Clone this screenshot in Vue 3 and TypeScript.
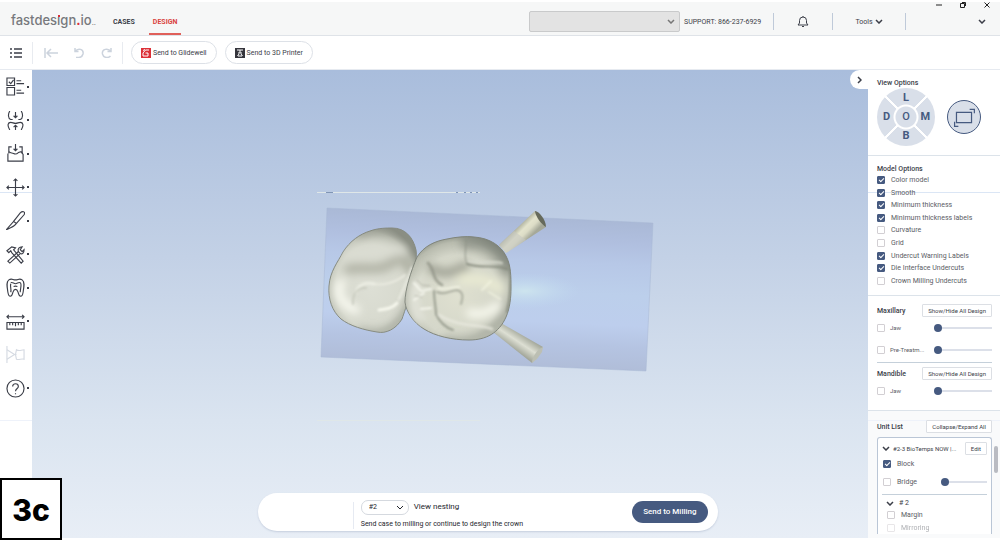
<script setup lang="ts">
import { ref } from 'vue'

interface Option {
  id: string
  label: string
  on: boolean
}
interface Layer extends Option {
  level: number
}

const modelOptions = ref<Option[]>([
  { id: 'color', label: 'Color model', on: true },
  { id: 'smooth', label: 'Smooth', on: true },
  { id: 'min', label: 'Minimum thickness', on: true },
  { id: 'minlabels', label: 'Minimum thickness labels', on: true },
  { id: 'curve', label: 'Curvature', on: false },
  { id: 'grid', label: 'Grid', on: false },
  { id: 'undercut', label: 'Undercut Warning Labels', on: true },
  { id: 'die', label: 'Die Interface Undercuts', on: true },
  { id: 'crown', label: 'Crown Milling Undercuts', on: false },
])

const maxillary = ref<Layer[]>([
  { id: 'max-jaw', label: 'Jaw', on: false, level: 0 },
  { id: 'max-pre', label: 'Pre-Treatm...', on: false, level: 0 },
])
const mandible = ref<Layer[]>([{ id: 'man-jaw', label: 'Jaw', on: false, level: 0 }])

const block = ref(true)
const bridge = ref(false)
const bridgeLevel = ref(0)
const margin = ref(false)
const mirroring = ref(false)

const views: string[] = ['L', 'D', 'O', 'M', 'B']

interface Tool {
  name: string
  enabled: boolean
  paths: string[]
}
const tools: Tool[] = [
  { name: 'Case checklist', enabled: true, paths: ['M1 1h8v8H1z', 'M1 11h8v8H1z', 'M3 5l2 2 3-4', 'M11 4h5M11 7h8M11 14h5M11 17h8'] },
  { name: 'Bite alignment', enabled: true, paths: ['M4 0C2 3 2 8 5 9h2M16 0c2 3 2 8-1 9h-2', 'M10 1v6M8 5l2 2 2-2', 'M4 20c-3-5-2-8 1-8 2 0 3 1 5 1s3-1 5-1c3 0 4 3 1 8', 'M10 20v-5M8 17l2-2 2 2'] },
  { name: 'Insertion', enabled: true, paths: ['M6 3H3v7M14 3h3v7', 'M3 8c2 2 3 1 5 2s3 1 5-1l3-1 2 3v7H2v-8', 'M10 0v7M8 5l2 2 2-2'] },
  { name: 'Move', enabled: true, paths: ['M10 1v18M1 10h18', 'M8 3l2-2 2 2M8 17l2 2 2-2M3 8l-2 2 2 2M17 8l2 2-2 2'] },
  { name: 'Sculpt', enabled: true, paths: ['M0 20l8-9 3 2c-2 4-6 4-11 7z', 'M8 11L15 2c2-2 6-2 4 2l-8 9'] },
  { name: 'Repair', enabled: true, paths: ['M2 17L13 7l2 2L4 19z', 'M13 7c-1-3 1-5 4-5l-2 3 2 2 2-2c0 4-2 5-4 4', 'M1 6l5-4 4 1-2 2 10 12-2 2L6 8 5 6 3 8z'] },
  { name: 'Tooth library', enabled: true, paths: ['M3 2c3-2 4 0 7 0s4-2 7 0 2 7 1 13-4 5-5 1c-1-3-1-4-3-4s-2 1-3 4c-1 4-4 5-5-1C1 9 0 4 3 2z', 'M5 5c2-1 3 1 5 1s3-2 5-1 0 6 0 10M5 6c-1 3 1 6 0 9M8 9c2-1 2-1 4 0'] },
  { name: 'Measure', enabled: true, paths: ['M1 5h18M3 3L1 5l2 2M17 3l2 2-2 2', 'M1 11h18v7H1zM4 11v3M7 11v3M10 11v4M13 11v3M16 11v3'] },
  { name: 'Section', enabled: false, paths: ['M1 1v18', 'M1 5l8 5-8 5M8 10h3', 'M11 5c3 2 5 0 8 0v10c-3-1-5 1-8 0l-1-5z'] },
  { name: 'Help', enabled: true, paths: ['M10 1a9 9 0 1 1 0 18 9 9 0 0 1 0-18z', 'M7 8c0-4 6-4 6 0 0 2-3 2-3 5M10 15v1'] },
]
</script>

<template>
  <div class="app">
    <header class="header">
      <div class="window-controls">
        <button aria-label="Minimize"><svg viewBox="0 0 6 6"><path d="M0 3h6" /></svg></button>
        <button aria-label="Restore"><svg viewBox="0 0 6 6"><path d="M.5 1.500h4v4h-4zM2 .5h3.500V4" /></svg></button>
        <button aria-label="Close"><svg viewBox="0 0 6 6"><path d="M.5.5l5 5M5.500.5l-5 5" /></svg></button>
      </div>
      <div class="header-main">
        <a class="logo" href="#">fastdes<span class="dot-i">ı</span>gn<b>.</b>io<small>..</small></a>
        <nav class="nav">
          <a href="#">CASES</a>
          <a href="#" class="active">DESIGN</a>
        </nav>
        <div class="header-right">
          <div class="select case-select">
            <select aria-label="Account"><option></option></select>
            <svg class="chev" viewBox="0 0 8 5"><path d="M1 1l3 3 3-3" /></svg>
          </div>
          <span class="support">SUPPORT: 866-237-6929</span>
          <div class="cell bell">
            <button aria-label="Notifications">
              <svg viewBox="0 0 12 13"><path d="M1 10h10L9.500 8V5.500a3.500 3.500 0 0 0-7 0V8zM5 11.500h2M6 1v1" /></svg>
            </button>
          </div>
          <div class="cell tools">
            <button>Tools <svg class="chev" viewBox="0 0 8 5"><path d="M1 1l3 3 3-3" /></svg></button>
          </div>
          <div class="cell user">
            <button aria-label="User menu"><svg class="chev" viewBox="0 0 8 5"><path d="M1 1l3 3 3-3" /></svg></button>
          </div>
        </div>
      </div>
    </header>

    <div class="toolbar">
      <button class="list" aria-label="Menu">
        <svg viewBox="0 0 12 10"><path d="M0 1h2M4 1h8M0 5h2M4 5h8M0 9h2M4 9h8" /></svg>
      </button>
      <div class="history">
        <button aria-label="Back to start"><svg viewBox="0 0 14 10"><path d="M1 0v10M3 5h11M7 1L3 5l4 4" /></svg></button>
        <button aria-label="Undo"><svg viewBox="0 0 14 10"><path d="M3 0v3.500h3.500M3 3.500C6-.5 12 1 11 6c-.5 2-2 3.300-4 3.500H4" /></svg></button>
        <button aria-label="Redo"><svg viewBox="0 0 14 10"><path d="M11 0v3.500H7.500M11 3.500C8-.5 1.500 1 2.500 6 3 8 4.500 9.500 7 9.500c1.500 0 2.500-.5 3.500-1.500" /></svg></button>
      </div>
      <button class="pill">
        <svg viewBox="0 0 10 10"><path fill="#dc3038" d="M0 0h10v10H0z" /><path fill="none" stroke="#fff" d="M8 2H4.500L2 5v3h5V5H4.500M2 2.500l2-1" /></svg>
        Send to Glidewell
      </button>
      <button class="pill">
        <svg viewBox="0 0 10 10"><path fill="#35353c" d="M0 0h10v10H0z" /><path fill="none" stroke="#fff" d="M2 2h6M5 2v3M3 5h4M2.500 8l1.500-2M7.500 8L6 6M3 8h4" /></svg>
        Send to 3D Printer
      </button>
    </div>

    <div class="body">
      <aside class="rail">
        <div class="rail-tools">
          <button v-for="t in tools" :key="t.name" :aria-label="t.name" :disabled="!t.enabled">
            <svg viewBox="0 0 20 20"><path v-for="d in t.paths" :key="d" :d="d" /></svg>
          </button>
        </div>
      </aside>

      <main class="canvas">
        <svg class="scene" viewBox="32 70 836 468" preserveAspectRatio="xMidYMid slice" role="img" aria-label="Crown nesting preview">
          <defs>
            <linearGradient id="blk" gradientUnits="userSpaceOnUse" x1="492" y1="213" x2="485" y2="365">
              <stop offset="0" stop-color="#a9b8d5" />
              <stop offset=".16" stop-color="#b0bfdf" />
              <stop offset=".3" stop-color="#b7c8e7" />
              <stop offset=".5" stop-color="#bccfeb" />
              <stop offset=".7" stop-color="#bdceed" />
              <stop offset=".84" stop-color="#b5c4e2" />
              <stop offset="1" stop-color="#b0bdd8" />
            </linearGradient>
            <radialGradient id="glow">
              <stop offset="0" stop-color="#cde4ee" />
              <stop offset="1" stop-color="#c0d8f0" stop-opacity="0" />
            </radialGradient>
            <radialGradient id="t1" cx=".48" cy=".56" r=".6">
              <stop offset="0" stop-color="#dddfd5" />
              <stop offset=".66" stop-color="#d7d9ce" />
              <stop offset=".86" stop-color="#bec1b5" />
              <stop offset="1" stop-color="#8d9186" />
            </radialGradient>
            <radialGradient id="t2" cx=".5" cy=".57" r=".6">
              <stop offset="0" stop-color="#dfe0d0" />
              <stop offset=".65" stop-color="#d5d7ca" />
              <stop offset=".86" stop-color="#b8bbae" />
              <stop offset="1" stop-color="#868b80" />
            </radialGradient>
            <linearGradient id="p1" gradientUnits="userSpaceOnUse" x1="515" y1="228" x2="527" y2="240">
              <stop offset="0" stop-color="#a5a896" />
              <stop offset=".4" stop-color="#e4e4cd" />
              <stop offset=".65" stop-color="#dcdcc6" />
              <stop offset="1" stop-color="#a6a999" />
            </linearGradient>
            <linearGradient id="p2" gradientUnits="userSpaceOnUse" x1="523" y1="334" x2="513" y2="349">
              <stop offset="0" stop-color="#a2a699" />
              <stop offset=".5" stop-color="#dddfd3" />
              <stop offset="1" stop-color="#a2a699" />
            </linearGradient>
            <path id="tooth1" d="M370 231C378 228 387 228 392 228C405 228 413 237 416 250C418 260 411 280 410 293C407 305 404 313 402 319C396 329 386 334 377 332C364 330 350 326 341 319C332 311 328 299 329 286C330 271 338 262 343 252C350 241 360 234 370 231Z" />
            <path id="tooth2" d="M417 257C424 246 435 241 447 239C456 237 466 236 474 237C490 238 501 246 506 256C511 265 511 277 511 288C511 297 510 308 506 317C499 333 486 340 469 340C452 340 435 336 424 329C414 323 406 312 405 302C405 290 411 271 417 257Z" />
            <clipPath id="c1"><use href="#tooth1" /></clipPath>
            <clipPath id="c2"><use href="#tooth2" /></clipPath>
            <filter id="soft" x="-30%" y="-30%" width="160%" height="160%"><feGaussianBlur stdDeviation="4" /></filter>
            <filter id="fine" x="-30%" y="-30%" width="160%" height="160%"><feGaussianBlur stdDeviation="1.300" /></filter>
          </defs>

          <path d="M317 192.500h163M317 420.500h163" stroke="#dfe7e8" />
          <path d="M326 192.500h7M456 192.500h2M464 192.500h2M470 192.500h2M476 192.500h2" stroke="#8095b4" />
          <path d="M327 208L653 223L646 371L321 357Z" fill="url(#blk)" stroke="#a9b8d5" stroke-width=".5" />
          <ellipse cx="525" cy="291" rx="55" ry="18" fill="url(#glow)" />

          <path d="M499 245L535 211L546 227L506 253Z" fill="url(#p1)" />
          <path d="M499 245L514 231L526 240L506 253Z" fill="#c6c8c1" opacity=".6" />
          <path d="M535 211C539 211 546 220 546 227C542 225 535 216 535 211Z" fill="#666a5b" />
          <path d="M501 323L543 347L532 363L493 332Z" fill="url(#p2)" />
          <path d="M543 347C538 349 532 356 532 363L537 359L542 352Z" fill="#bcbfb3" />

          <use href="#tooth1" fill="url(#t1)" stroke="#868b81" />
          <g clip-path="url(#c1)" fill="none" stroke-linecap="round">
            <g filter="url(#soft)">
              <path d="M360 233C383 226 408 229 414 252" stroke="#85897f" stroke-width="9" opacity=".6" />
              <path d="M349 269C365 266 377 273 392 263S408 268 408 268" stroke="#a9ab9d" stroke-width="10" opacity=".8" />
              <path d="M349 256C370 251 388 248 402 251" stroke="#dbddd3" stroke-width="9" />
              <path d="M341 283C335 294 343 306 356 310" stroke="#fbfcf3" stroke-width="8" />
              <path d="M411 296C404 324 386 337 361 331" stroke="#8d9287" stroke-width="7" opacity=".6" />
            </g>
            <g filter="url(#fine)">
              <path d="M356 293C358 284 366 282 374 284" stroke="#eff0e6" stroke-width="3" opacity=".8" />
              <path d="M374 284C385 286 398 281 405 275" stroke="#eff0e6" stroke-width="2" opacity=".7" />
              <path d="M379 310C387 309 393 308 397 303" stroke="#f6f7ed" stroke-width="3" />
              <path d="M399 299C404 288 408 280 412 268" stroke="#e9eae0" stroke-width="3" opacity=".8" />
              <path d="M353 304C352 292 360 287 366 288" stroke="#c2c4b8" stroke-width="2" opacity=".7" />
            </g>
          </g>

          <use href="#tooth2" fill="url(#t2)" stroke="#80857b" />
          <g clip-path="url(#c2)" fill="none" stroke-linecap="round">
            <g filter="url(#soft)">
              <path d="M467 242C490 240 503 252 507 268" stroke="#7d8278" stroke-width="14" opacity=".6" />
              <path d="M431 268C446 278 458 269 466 266" stroke="#94968a" stroke-width="9" opacity=".8" />
              <path d="M463 279C475 280 487 278 499 288" stroke="#e8e9d2" stroke-width="11" />
              <path d="M470 313C482 316 492 311 497 306" stroke="#fafbf1" stroke-width="8" />
              <path d="M417 283C413 297 413 311 420 319" stroke="#e6e7de" stroke-width="8" />
              <path d="M446 339C468 344 496 334 509 305" stroke="#8d9287" stroke-width="7" opacity=".6" />
            </g>
            <g filter="url(#fine)">
              <path d="M466 239C467 249 463 255 467 263" stroke="#8b9084" stroke-width="1" />
              <path d="M467 264C482 269 495 264 507 269" stroke="#7f8478" stroke-width="2" opacity=".8" />
              <path d="M468 261C482 263 493 261 502 263" stroke="#d6d8cd" stroke-width="2" />
              <path d="M428 263C436 271 431 279 442 285" stroke="#8d9083" stroke-width="3" opacity=".7" />
              <path d="M434 291C434 301 436 307 436 314C440 323 447 328 453 330" stroke="#898e81" stroke-width="2" opacity=".8" />
              <path d="M437 292C446 296 450 290 457 290C464 292 463 298 461 304" stroke="#96998b" stroke-width="2" opacity=".7" />
              <path d="M438 288C447 291 453 286 459 287" stroke="#f0f1e2" stroke-width="2" />
              <path d="M414 283L421 291L431 289M414 300L424 293M421 309L431 308" stroke="#f4f5ec" stroke-width="2" />
              <path d="M417 280L422 285L430 286M415 296L422 297" stroke="#9fa295" stroke-width="1" opacity=".7" />
              <path d="M439 315C457 327 478 324 492 329" stroke="#e9eae0" stroke-width="3" opacity=".7" />
              <path d="M482 290L491 281M489 292L500 299" stroke="#f4f5e2" stroke-width="2" opacity=".7" />
              <path d="M510 265C511 283 511 297 507 312" stroke="#888d81" stroke-width="2" />
            </g>
          </g>
        </svg>

        <button class="collapse" aria-label="Collapse panel">
          <svg viewBox="0 0 5 8"><path d="M1 1l3 3-3 3" /></svg>
        </button>

        <section class="dock">
          <div class="dock-text">
            <div class="dock-row">
              <div class="select unit-select">
                <select id="unit"><option>#2</option></select>
                <svg class="chev" viewBox="0 0 8 5"><path d="M1 1l3 3 3-3" /></svg>
              </div>
              <label for="unit">View nesting</label>
            </div>
            <p>Send case to milling or continue to design the crown</p>
          </div>
          <button class="primary">Send to Milling</button>
        </section>
        <div class="step">3c</div>
      </main>

      <aside class="panel">
        <section class="view">
          <h2>View Options</h2>
          <div class="view-row">
            <div class="wheel">
              <button v-for="v in views" :key="v" :class="'v-' + v">{{ v }}</button>
            </div>
            <button class="fit" aria-label="Fit to screen">
              <svg viewBox="0 0 34 34"><path d="M9 12h16v11H9zM23 9h5v4M7 22v5h4" /></svg>
            </button>
          </div>
        </section>

        <section class="model">
          <h2>Model Options</h2>
          <div class="options">
            <label v-for="o in modelOptions" :key="o.id"><input v-model="o.on" type="checkbox" />{{ o.label }}</label>
          </div>
        </section>

        <section class="jaws">
          <div class="head"><h2>Maxillary</h2><button class="btn">Show/Hide All Design</button></div>
          <div v-for="l in maxillary" :key="l.id" class="layer">
            <label><input v-model="l.on" type="checkbox" />{{ l.label }}</label>
            <input v-model.number="l.level" type="range" min="0" max="100" :aria-label="l.label + ' opacity'" />
          </div>
          <hr />
          <div class="head"><h2>Mandible</h2><button class="btn">Show/Hide All Design</button></div>
          <div v-for="l in mandible" :key="l.id" class="layer">
            <label><input v-model="l.on" type="checkbox" />{{ l.label }}</label>
            <input v-model.number="l.level" type="range" min="0" max="100" :aria-label="l.label + ' opacity'" />
          </div>
        </section>

        <section class="units">
          <div class="head"><h2>Unit List</h2><button class="btn">Collapse/Expand All</button></div>
          <div class="card">
            <div class="card-head">
              <svg class="chev" viewBox="0 0 8 5"><path d="M1 1l3 3 3-3" /></svg>
              <span>#2-3 BioTemps NOW |...</span>
              <button class="btn">Edit</button>
            </div>
            <label class="block"><input v-model="block" type="checkbox" />Block</label>
            <div class="bridge">
              <label><input v-model="bridge" type="checkbox" />Bridge</label>
              <input v-model.number="bridgeLevel" type="range" min="0" max="100" aria-label="Bridge opacity" />
            </div>
            <hr />
            <div class="sub">
              <div class="sub-head"><svg class="chev" viewBox="0 0 8 5"><path d="M1 1l3 3 3-3" /></svg># 2</div>
              <label><input v-model="margin" type="checkbox" />Margin</label>
              <label class="faded"><input v-model="mirroring" type="checkbox" />Mirroring</label>
            </div>
          </div>
          <div class="thumb"></div>
        </section>
      </aside>
    </div>
  </div>
</template>

<style>
body {
  background: #fff;
}
</style>

<style scoped>
.app {
  display: flex;
  flex-direction: column;
  box-sizing: border-box;
  height: 100vh;
  min-height: 540px;
  padding: 2px 0;
  font: 7px/10px Roboto, "Liberation Sans", sans-serif;
  color: #3b3e48;
}
.app *,
.app *::before,
.app *::after {
  box-sizing: border-box;
}
button,
select {
  font: inherit;
  color: inherit;
}
button {
  display: flex;
  align-items: center;
  justify-content: center;
  padding: 0;
  border: 0;
  background: none;
  white-space: nowrap;
}
a {
  color: inherit;
  text-decoration: none;
}
svg {
  display: block;
  flex: none;
  fill: none;
  stroke: currentColor;
}
h2,
p {
  margin: 0;
  font-size: 7px;
  font-weight: 500;
}
.chev {
  width: 8px;
  height: 5px;
  stroke-width: 1.500;
}

/* header */
.header {
  flex: none;
  background: #f6f7f7;
  border-bottom: 1px solid #dfe3e8;
}
.window-controls {
  display: flex;
  justify-content: flex-end;
  gap: 18px;
  height: 6px;
  padding-right: 10px;
  color: #222;
}
.window-controls svg {
  width: 6px;
  height: 6px;
}
.header-main {
  display: flex;
  align-items: center;
  height: 27px;
  padding-left: 11px;
}
.logo {
  width: 85px;
  font: 500 13px/20px Inter, sans-serif;
  color: #77797d;
  white-space: nowrap;
}
.logo b {
  color: #dc3038;
}
.logo small {
  font-size: 7px;
}
.dot-i {
  position: relative;
}
.dot-i::before {
  content: "";
  position: absolute;
  top: 3px;
  left: 1px;
  width: 2px;
  height: 2px;
  background: #dc3038;
}
.nav {
  display: flex;
  align-self: stretch;
  gap: 10px;
  margin-left: 13px;
  font-weight: 700;
}
.nav a {
  padding: 9px 4px 0;
}
.nav .active {
  color: #d9443f;
  border-bottom: 2px solid #e0605a;
}
.header-right {
  display: flex;
  align-items: center;
  margin-left: auto;
}
.select {
  position: relative;
  display: flex;
  align-items: center;
}
.select select {
  width: 100%;
  height: 100%;
  margin: 0;
  appearance: none;
  border: 1px solid #c9cacb;
  border-radius: 2px;
  background: #e3e3e3;
}
.select .chev {
  position: absolute;
  right: 5px;
  pointer-events: none;
}
.case-select {
  width: 151px;
  height: 21px;
}
.case-select .chev {
  color: #777;
}
.support {
  width: 93px;
  padding-left: 4px;
  white-space: nowrap;
}
.cell {
  display: flex;
  align-items: center;
  justify-content: center;
  height: 17px;
  border-left: 1px solid #bfcad9;
}
.bell {
  width: 59px;
}
.bell svg {
  width: 12px;
  height: 13px;
}
.tools {
  width: 73px;
}
.tools button {
  gap: 2px;
}
.user {
  width: 95px;
  justify-content: flex-end;
  padding-right: 14px;
}

/* toolbar */
.toolbar {
  display: flex;
  flex: none;
  align-items: center;
  height: 34px;
  border-bottom: 1px solid #e6eaf0;
}
.list {
  width: 32px;
}
.list svg {
  width: 12px;
  height: 10px;
  stroke-width: 1.500;
}
.history {
  display: flex;
  align-items: center;
  gap: 14px;
  height: 22px;
  width: 91px;
  padding-left: 11px;
  border: solid #e8ebf0;
  border-width: 0 1px;
  color: #ccd3dd;
}
.history svg {
  width: 14px;
  height: 10px;
  stroke-width: 1.500;
}
.pill {
  height: 23px;
  margin-left: 8px;
  padding: 0 9px;
  gap: 2px;
  border: 1px solid #dde1e7;
  border-radius: 12px;
}
.pill svg {
  width: 10px;
  height: 10px;
  stroke: none;
}

/* body */
.body {
  position: relative;
  display: flex;
  flex: 1;
  min-height: 0;
}
.rail {
  width: 32px;
  background: linear-gradient(#dbe6f5, #dbe6f5) 0 122px / 100% 1px no-repeat,
    linear-gradient(#eef2fa, #eef2fa) 0 350px / 100% 1px no-repeat;
}
.rail-tools {
  display: flex;
  flex-direction: column;
  height: 335px;
}
.rail-tools button {
  flex: 1;
  width: 29px;
  justify-content: space-between;
  padding-left: 6px;
}
.rail-tools button::after {
  content: "";
  width: 2px;
  height: 2px;
  background: #3b3e48;
}
.rail-tools button:disabled {
  color: #d5dae2;
}
.rail-tools button:disabled::after {
  background: none;
}
.rail-tools svg {
  width: 19px;
  height: 19px;
  stroke-width: 1.200;
}
.canvas {
  display: flex;
  flex: 1;
  align-items: flex-end;
  min-width: 0;
  background: linear-gradient(#a9bddc, #c3d1e6 40%, #dae4f0 75%, #e8eef6);
}
.scene {
  position: absolute;
  left: 32px;
  right: 132px;
  width: calc(100% - 164px);
  height: 100%;
  stroke: none;
}
.collapse {
  position: absolute;
  top: 0;
  right: 132px;
  width: 18px;
  height: 19px;
  border-radius: 10px 0 0 10px;
  background: #fff;
}
.collapse svg {
  width: 5px;
  height: 8px;
  stroke-width: 1.500;
}
.dock {
  position: relative;
  display: flex;
  align-items: center;
  width: 55%;
  height: 38px;
  margin: 0 0 7px 27%;
  padding-right: 10px;
  border-radius: 19px;
  background: #fff;
  box-shadow: 0 1px 2px #c5cede;
  color: #24262d;
}
.dock-text {
  margin-left: 95px;
  padding: 4px 0 0 8px;
  background: linear-gradient(#e6eaf2, #e6eaf2) 0 6px / 1px 100% no-repeat;
  white-space: nowrap;
}
.dock-row {
  display: flex;
  align-items: center;
  gap: 5px;
  font-size: 8px;
}
.dock p {
  margin-top: 4px;
  font-weight: 400;
}
.unit-select {
  width: 48px;
  height: 15px;
  font-size: 7px;
}
.unit-select select {
  padding-left: 7px;
  border-color: #d5d9df;
  border-radius: 7px;
  background: #fff;
}
.unit-select .chev {
  stroke-width: 1;
}
.primary {
  height: 22px;
  margin-left: auto;
  padding: 0 11px;
  border-radius: 11px;
  background: #465a80;
  color: #fff;
  font-size: 8px;
  font-weight: 500;
}
.step {
  position: absolute;
  left: 0;
  bottom: -2px;
  width: 62px;
  height: 62px;
  border: 2px solid #000;
  background: #fff;
  color: #000;
  font: 800 30px/60px Inter, sans-serif;
  text-align: center;
}

/* right panel */
.panel {
  display: flex;
  flex-direction: column;
  width: 132px;
  background: #fff;
}
.panel section {
  padding: 0 8px 0 9px;
  border-bottom: 1px solid #dce3ea;
}
.panel .view {
  height: 86px;
  padding-top: 8px;
}
.view-row {
  display: flex;
  align-items: center;
  gap: 12px;
}
.wheel {
  display: grid;
  grid-template: "a l b" 1fr "d o m" 1fr "c z e" 1fr / 1fr 1fr 1fr;
  width: 58px;
  height: 58px;
  border-radius: 50%;
  background:
    radial-gradient(circle, #d9dfe9 10px, #fff 11px 12px, transparent 13px),
    linear-gradient(45deg, transparent 49%, #fff 49% 51%, transparent 51%),
    linear-gradient(135deg, transparent 49%, #fff 49% 51%, transparent 51%),
    #d9dfe9;
  color: #465a80;
  font-size: 11px;
  font-weight: 700;
}
.v-L { grid-area: l; }
.v-D { grid-area: d; }
.wheel .v-O { grid-area: o; font-weight: 500; }
.v-M { grid-area: m; }
.v-B { grid-area: z; }
.fit {
  width: 34px;
  height: 34px;
  border: 1px solid #465a80;
  border-radius: 50%;
  background: #d9dfe9;
  color: #465a80;
}
.fit svg {
  width: 32px;
  height: 32px;
  stroke-width: 1.300;
}
.panel .model {
  height: 140px;
  padding-top: 8px;
  background: linear-gradient(#dbe6f5, #dbe6f5) 0 36px / 100% 1px no-repeat;
}
.options {
  display: grid;
  grid-auto-rows: 1fr;
  height: 113px;
}
label {
  display: flex;
  align-items: center;
  gap: 6px;
  color: #5a5d65;
  white-space: nowrap;
}
.dock label {
  color: inherit;
}
input[type="checkbox"] {
  position: relative;
  flex: none;
  appearance: none;
  width: 8px;
  height: 8px;
  margin: 0;
  border: 1px solid #d2cfd3;
  border-radius: 1px;
  background: #fff;
}
input[type="checkbox"]:checked {
  border-color: #465a80;
  background: #465a80;
}
input[type="checkbox"]:checked::after {
  content: "";
  position: absolute;
  top: 0;
  left: 2px;
  width: 3px;
  height: 5px;
  border: solid #fff;
  border-width: 0 1px 1px 0;
  transform: rotate(45deg);
}
input[type="range"] {
  appearance: none;
  width: 58px;
  height: 8px;
  margin: 0;
  background: linear-gradient(#dce0e9, #dce0e9) 0 3px / 100% 2px no-repeat;
}
input[type="range"]::-webkit-slider-thumb {
  appearance: none;
  width: 8px;
  height: 8px;
  border-radius: 50%;
  background: #465a80;
}
.panel .jaws {
  height: 115px;
  padding-top: 8px;
}
.head {
  display: flex;
  align-items: center;
  justify-content: space-between;
}
.btn {
  height: 13px;
  padding: 0 5px;
  border: 1px solid #dcdfe4;
  border-radius: 1px;
  background: #fff;
  font-size: 6px;
}
.layer,
.bridge {
  display: flex;
  align-items: center;
  justify-content: space-between;
  height: 22px;
}
.layer label {
  gap: 5px;
  font-size: 6px;
}
hr {
  margin: 1px 0 4px;
  border: 0;
  border-top: 1px solid #c5d0da;
}
.panel .units {
  position: relative;
  display: flex;
  flex: 1;
  flex-direction: column;
  min-height: 0;
  padding-top: 9px;
  padding-bottom: 4px;
  border: 0;
  background: linear-gradient(#eef2fa, #eef2fa) 0 9px / 100% 1px no-repeat, #f9fafb;
}
.card {
  flex: 1;
  min-height: 0;
  margin-top: 4px;
  padding: 4px 4px 0;
  overflow: hidden;
  border: 1px solid #bac6d6;
  border-bottom: 0;
  border-radius: 3px 3px 0 0;
  background: #fff;
}
.card-head {
  display: flex;
  align-items: center;
}
.card-head span {
  flex: 1;
  padding-left: 3px;
  font-size: 6px;
  white-space: nowrap;
}
.card .block {
  height: 18px;
}
.card > label,
.bridge {
  padding-left: 1px;
}
.card .bridge {
  height: 18px;
}
.bridge input[type="range"] {
  width: 46px;
}
.card hr {
  margin: 3px 0;
}
.sub {
  padding-left: 4px;
}
.sub-head {
  display: flex;
  align-items: center;
  gap: 5px;
}
.sub label {
  height: 14px;
  padding-left: 1px;
}
.sub .faded {
  height: 11px;
  opacity: .5;
}
.thumb {
  position: absolute;
  top: 35px;
  right: 2px;
  width: 4px;
  height: 27px;
  border-radius: 2px;
  background: #b9bbc2;
}
</style>
